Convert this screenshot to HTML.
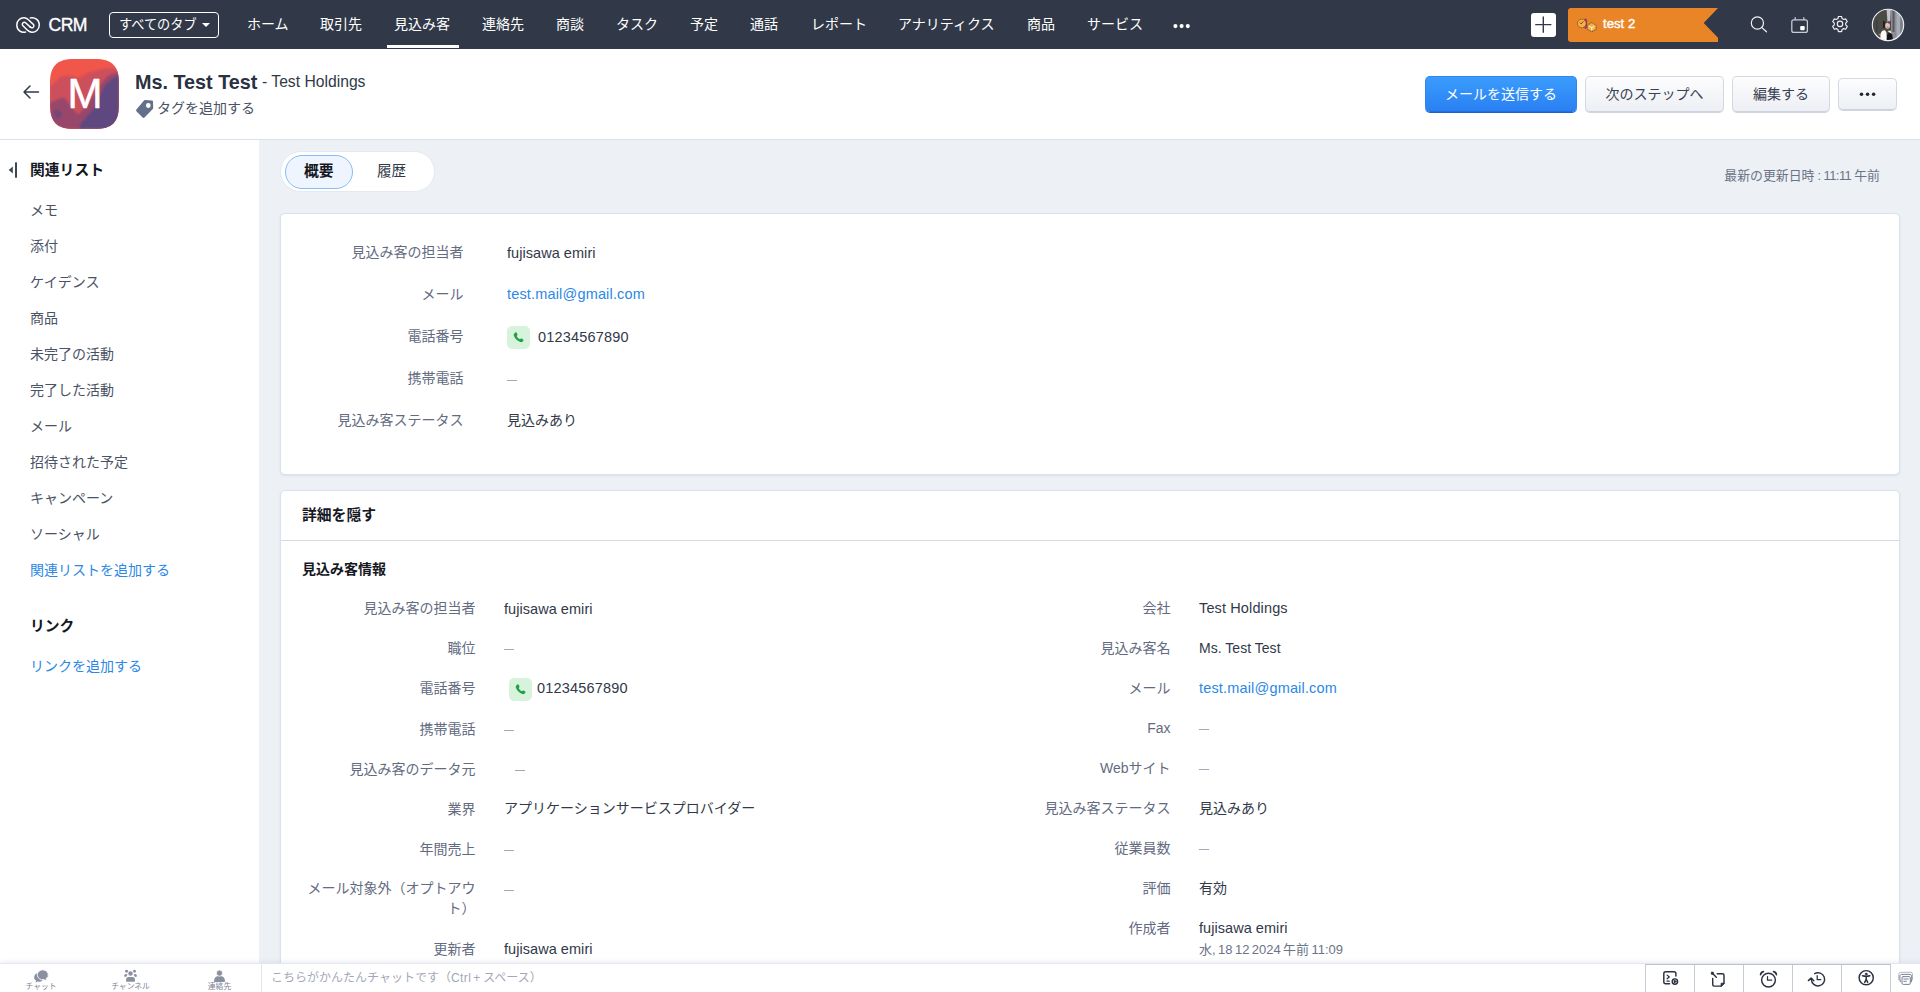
<!DOCTYPE html>
<html lang="ja">
<head>
<meta charset="utf-8">
<title>Ms. Test Test - CRM</title>
<style>
*{box-sizing:border-box;margin:0;padding:0}
html,body{width:1920px;height:992px;overflow:hidden;background:#edf0f5}
body{font-family:"Liberation Sans","Noto Sans CJK JP",sans-serif;font-size:14px;color:#313949;position:relative;-webkit-font-smoothing:antialiased}
.abs{position:absolute;white-space:nowrap}
/* top nav */
#nav{position:absolute;left:0;top:0;width:1920px;height:49px;background:#313949}
#nav .t{position:absolute;top:0;height:49px;line-height:49px;color:#fff;font-size:14px;white-space:nowrap}
#nav .brand{font-size:17.600px;left:48.500px;letter-spacing:-0.55px;line-height:51px;-webkit-text-stroke:0.35px #fff}
#alltabs{position:absolute;left:109px;top:12px;width:110px;height:26px;border:1px solid #fff;border-radius:4px;color:#fff;font-size:13.2px;line-height:24px;padding-left:9px;white-space:nowrap}
#alltabs i{position:absolute;right:8px;top:10px;border:4px solid transparent;border-top:4.5px solid #fff;border-bottom:0}
#navul{position:absolute;left:387px;top:45px;width:72px;height:3px;background:#fff}
/* header */
#hdr{position:absolute;left:0;top:49px;width:1920px;height:91px;background:#fff;border-bottom:1px solid #d8e1ee}
#avatar{position:absolute;left:50px;top:10px;width:69px;height:70px;color:#fff;font-size:42px;text-align:center;line-height:69px;padding-left:1px;-webkit-text-stroke:0.5px #fff}
.btn{position:absolute;height:36px;top:27px;border:1px solid #d3d8e2;border-bottom-color:#cdd2dd;border-radius:5px;background:linear-gradient(#fdfdfe,#eceff4);box-shadow:0 1px 0 #cfd4df;font-size:14px;line-height:35px;text-align:center;color:#394052;white-space:nowrap}
.btn.blue{background:linear-gradient(#3a9cfc,#2a80f2);border-color:#2f86f0;border-bottom-color:#1f6fe0;box-shadow:0 1px 0 #1c62cc;color:#fff}
/* sidebar */
#side{position:absolute;left:0;top:140px;width:259px;height:824px;background:#fff}
#side .it{position:absolute;left:30px;font-size:14px;color:#4a5265;white-space:nowrap;line-height:20px}
#side .hd{position:absolute;left:30px;font-size:14.8px;font-weight:bold;color:#15181f;white-space:nowrap;line-height:20px}
#side .lk{color:#2b88e6}
/* main */
.card{position:absolute;background:#fff;border:1px solid #d9e2ef;border-radius:5px;box-shadow:0 1px 2px rgba(190,200,220,.4)}
.lab{position:absolute;text-align:right;color:#636b7f;font-size:14px;line-height:20px;white-space:nowrap}
.val{position:absolute;color:#313949;font-size:14px;line-height:20px;white-space:nowrap}
.val.lk{color:#2b88e6}
.dash{position:absolute;width:10px;height:1px;background:#a2a8b8}
.ph{position:absolute;width:23px;height:23px;border-radius:5px;background:#d7f3db}
.ph svg{position:absolute;left:6px;top:6px}
.en{font-size:14.5px}
/* bottom */
#bot{position:absolute;left:0;top:964px;width:1920px;height:28px;background:#fff;box-shadow:0 -1px 0 #e4e7ee,0 -2px 5px rgba(160,170,195,.22)}
.bl{top:18px;text-align:center;font-size:7.8px;line-height:10px;color:#7f8598}
</style>
</head>
<body>

<div id="nav">
  <svg class="abs" style="left:12px;top:12px" width="32" height="26" viewBox="12 12 32 26" fill="none" stroke="#fff" stroke-width="1.45" stroke-linecap="round" stroke-linejoin="round">
    <path d="M25.600 32.100C21.200 33.100 16.800 30.200 16.800 25C16.800 20.300 20.600 17.500 24.300 17.800C26.300 18 27.600 18.900 29 20.300L33 24.100C34.200 25.300 34.100 26.600 33.200 27.300C32.200 28 31.100 27.800 30.100 26.900"/>
    <path d="M30.300 17.900C34.700 16.900 39.300 19.800 39.300 25C39.300 29.700 35.400 32.500 31.700 32.200C29.700 32 28.400 31.100 27 29.700L23.200 26C22 24.800 22.100 23.500 23 22.800C24 22.100 25.100 22.300 26.100 23.200L30.100 26.900"/>
  </svg>
  <div class="t brand">CRM</div>
  <div id="alltabs">すべてのタブ<i></i></div>
  <div class="t" style="left:247px">ホーム</div>
  <div class="t" style="left:320px">取引先</div>
  <div class="t" style="left:394px">見込み客</div>
  <div class="t" style="left:482px">連絡先</div>
  <div class="t" style="left:556px">商談</div>
  <div class="t" style="left:616px">タスク</div>
  <div class="t" style="left:690px">予定</div>
  <div class="t" style="left:750px">通話</div>
  <div class="t" style="left:811px">レポート</div>
  <div class="t" style="left:898px">アナリティクス</div>
  <div class="t" style="left:1027px">商品</div>
  <div class="t" style="left:1087px">サービス</div>
  <svg class="abs" style="left:1170px;top:20px" width="24" height="12" viewBox="1170 20 24 12" fill="#fff"><circle cx="1175.400" cy="26.100" r="2.050"/><circle cx="1181.600" cy="26.100" r="2.050"/><circle cx="1187.800" cy="26.100" r="2.050"/></svg>
  <div class="abs" style="left:1531px;top:13px;width:25px;height:24px;background:#fff;border-radius:3px">
    <svg class="abs" style="left:0;top:0" width="25" height="24" viewBox="1531 13 25 24" stroke="#313949" stroke-width="1.4" fill="none"><path d="M1543.300 16.400V32.800M1535.200 24.600H1551.400"/></svg>
  </div>
  <svg class="abs" style="left:1560px;top:0" width="360" height="49" viewBox="1560 0 360 49">
    <path d="M1571 8H1718L1703.700 23L1718 37.700V42H1571Q1568 42 1568 39V11Q1568 8 1571 8Z" fill="#e98526"/>
    <g stroke="#4a3a4e" stroke-width="0.8" stroke-dasharray="1.300 .7">
      <rect x="1584.500" y="19" width="2.200" height="9.500" rx="1" fill="#b23a6e" stroke="#8a2d58"/>
      <circle cx="1581.800" cy="23.500" r="4.300" fill="#f6b13c"/>
      <path d="M1587.300 25.300L1591.800 22.600L1596.200 25.300V29.300L1591.800 31.600L1587.300 29.300Z" fill="#f6b13c"/>
    </g>
    <path d="M1579.800 22.600l1.300 1.300l2.300-2.600" stroke="#6b3a2a" stroke-width="0.9" fill="none"/>
    <path d="M1589.300 26.400l2.500 1.200l2.500-1.200M1591.800 27.600v2.600" stroke="#fff" stroke-width="0.9" fill="none"/>
    <g fill="none" stroke="#f2f3f6" stroke-width="1.200" stroke-linecap="round">
      <circle cx="1757.400" cy="23" r="6.100"/>
      <path d="M1761.900 27.600L1766.500 31.800"/>
    </g>
    <g fill="none" stroke="#c9cdd8" stroke-width="1.250" stroke-linecap="round">
      <rect x="1791.800" y="19.800" width="15.600" height="12.600" rx="2"/>
      <path d="M1795.200 17.600V19.600M1803.800 17.600V19.600"/>
    </g>
    <rect x="1800.200" y="25.900" width="4.500" height="4.300" rx="1" fill="#fff"/>
    <g fill="none" stroke="#eef0f4" stroke-width="1.150" stroke-linejoin="round">
      <circle cx="1840" cy="23.900" r="2.700"/>
      <path d="M1838.400 16.500h3.200l.5 2.100l1.500.9l2.100-.6l1.600 2.800l-1.600 1.500v1.700l1.600 1.500l-1.600 2.800l-2.100-.6l-1.500.9l-.5 2.100h-3.200l-.5-2.100l-1.500-.9l-2.100.6l-1.600-2.800l1.600-1.500v-1.700l-1.600-1.500l1.600-2.800l2.100.6l1.500-.9z"/>
    </g>
    <defs><clipPath id="avc"><circle cx="1888" cy="24.900" r="15.500"/></clipPath></defs>
    <g clip-path="url(#avc)">
      <rect x="1872" y="8" width="32" height="34" fill="#4b4a44"/>
      <rect x="1891" y="8" width="13" height="34" fill="#8b8f9b"/>
      <rect x="1892.500" y="10" width="2" height="22" fill="#5a5b58"/>
      <rect x="1896.500" y="10" width="3.500" height="30" fill="#a7abb6"/>
      <rect x="1900.500" y="14" width="2" height="24" fill="#7a7e89"/>
      <path d="M1886.500 8.500H1890.800L1890.300 21L1887.500 22Z" fill="#c3c6cf"/>
      <rect x="1876" y="20" width="1.500" height="12" fill="#3b3d4a"/>
      <rect x="1883" y="21" width="1.800" height="7" fill="#1f1f23"/>
      <path d="M1880.400 41V34.500Q1881.500 30.300 1884.300 30.300Q1886.200 30.500 1886.600 34V41Z" fill="#fafafb"/>
      <path d="M1886.800 41L1887.200 34.500L1889.600 32.400L1892.200 34.500L1893.200 41Z" fill="#141417"/>
      <path d="M1887.500 31L1890.500 30.500L1891.500 33.500L1889.500 32.500Z" fill="#eeeef0"/>
      <ellipse cx="1887.600" cy="25.800" rx="2.400" ry="3" fill="#dfc3c0"/>
      <circle cx="1887.700" cy="27.300" r="1.100" fill="#e08484"/>
      <rect x="1888" y="21" width=".9" height="2.600" fill="#b2326b"/>
      <circle cx="1895.600" cy="34" r=".7" fill="#d45a5a"/><circle cx="1879.500" cy="34.500" r=".7" fill="#e08a80"/>
    </g>
    <circle cx="1888" cy="24.900" r="15.700" fill="none" stroke="#f1f2f5" stroke-width="1.100"/>
  </svg>
  <div class="t" style="left:1603px;font-size:13.2px;line-height:47px;letter-spacing:0;-webkit-text-stroke:0.4px #fff">test 2</div>
  <div id="navul"></div>
</div>

<div id="hdr">
  <svg class="abs" style="left:22px;top:35px" width="18" height="16" viewBox="0 0 18 16" fill="none" stroke="#313949" stroke-width="1.5" stroke-linecap="round" stroke-linejoin="round"><path d="M16.500 8H2M8 2L2 8l6 6"/></svg>
  <svg class="abs" style="left:50px;top:10px" width="69" height="70" viewBox="0 0 69 70">
    <defs><clipPath id="sq"><path d="M24 0H45C62 0 69 7 69 24V46C69 63 62 70 45 70H24C7 70 0 63 0 46V24C0 7 7 0 24 0Z"/></clipPath><filter id="bl" x="-10%" y="-10%" width="120%" height="120%"><feGaussianBlur stdDeviation="0.9"/></filter></defs>
    <g clip-path="url(#sq)">
      <rect width="69" height="70" fill="#f0564a"/>
      <g filter="url(#bl)">
      <path d="M0 28L5 23L10 18L16 16.500L22 17.500L28 19L33 17L38 13.500L45 12L54 9.500L63 9L69 12V70H0Z" fill="#cd505c"/>
      <path d="M0 44L6 41L12 38.500L16 40L20 46L26 54L29 55L33 50L40 41L46 33L50 26L54 21L60 15.500L66 13.500L69 14V70H0Z" fill="#98476b"/>
      <path d="M29 70L31 64L36 58L42 52L47 44L51 34L55 26L62 20L69 16V70Z" fill="#5f4780"/>
      <path d="M3 52L8 50L12 54L11 59L6 60Z" fill="#6b4779" opacity=".8"/>
      </g>
    </g>
  </svg>
  <div id="avatar">M</div>
  <div class="abs" style="left:135px;top:20px;font-size:19.8px;font-weight:bold;line-height:26px;color:#2a3142">Ms. Test Test</div>
  <div class="abs" style="left:262px;top:22px;font-size:15.7px;line-height:22px;color:#313949">- Test Holdings</div>
  <svg class="abs" style="left:134px;top:49px" width="22" height="22" viewBox="134 98 22 22"><path fill-rule="evenodd" d="M145 100L152 100.600Q153 100.700 153 101.800L153.200 108Q153.200 108.600 152.800 109L144.500 117.600Q143.500 118.500 142.600 117.600L136.400 111.300Q135.700 110.400 136.400 109.600L144 100.500Q144.400 100 145 100ZM148.300 103.100a2.400 2.400 0 1 0 0 4.800a2.400 2.400 0 1 0 0-4.800Z" fill="#627089"/></svg>
  <div class="abs" style="left:157px;top:49px;font-size:14px;line-height:20px;color:#4a5265">タグを追加する</div>
  <div class="btn blue" style="left:1425px;width:152px">メールを送信する</div>
  <div class="btn" style="left:1585px;width:139px">次のステップへ</div>
  <div class="btn" style="left:1732px;width:98px">編集する</div>
  <div class="btn" style="left:1838px;width:59px;top:29px;height:32px"><svg class="abs" style="left:16px;top:10px" width="26" height="10" viewBox="1855 89 26 10" fill="#1f2533"><circle cx="1861.500" cy="94.200" r="1.750"/><circle cx="1867.550" cy="94.200" r="1.750"/><circle cx="1873.600" cy="94.200" r="1.750"/></svg></div>
</div>

<div id="side">
  <svg class="abs" style="left:6px;top:20px" width="14" height="20" viewBox="6 160 14 20" fill="#3e4555"><path d="M8.700 170L12.800 166.600V173.600Z"/><rect x="15" y="162.200" width="2" height="15.600" rx="0.500"/></svg>
  <div class="hd" style="top:20px">関連リスト</div>
  <div class="it" style="top:60px">メモ</div>
  <div class="it" style="top:96px">添付</div>
  <div class="it" style="top:132px">ケイデンス</div>
  <div class="it" style="top:168px">商品</div>
  <div class="it" style="top:204px">未完了の活動</div>
  <div class="it" style="top:240px">完了した活動</div>
  <div class="it" style="top:276px">メール</div>
  <div class="it" style="top:312px">招待された予定</div>
  <div class="it" style="top:348px">キャンペーン</div>
  <div class="it" style="top:384px">ソーシャル</div>
  <div class="it lk" style="top:420px">関連リストを追加する</div>
  <div class="hd" style="top:476px">リンク</div>
  <div class="it lk" style="top:516px">リンクを追加する</div>
</div>

<div id="main">
  <div class="abs" style="left:280px;top:151px;width:155px;height:41px;background:#fff;border:1px solid #e5e8ef;border-radius:21px"></div>
  <div class="abs" style="left:285px;top:155px;width:68px;height:34px;background:#eef5fe;border:1px solid #86bdf6;border-radius:17px"></div>
  <div class="abs" style="left:304px;top:161px;font-size:14.8px;font-weight:bold;line-height:20px;color:#15181f">概要</div>
  <div class="abs" style="left:377px;top:161px;font-size:14.6px;line-height:20px;color:#313949">履歴</div>
  <div class="abs" style="right:40px;top:167px;font-size:12.9px;line-height:18px;color:#6b7386">最新の更新日時<span style="letter-spacing:-0.55px"> : 11:11 </span>午前</div>
  <div class="card" style="left:280px;top:213px;width:1620px;height:262px"></div>
  <div class="lab" style="right:1456.5px;top:242px">見込み客の担当者</div>
  <div class="val en" style="left:507px;top:243px;letter-spacing:0.05px">fujisawa emiri</div>
  <div class="lab" style="right:1456.5px;top:284px">メール</div>
  <div class="val lk en" style="left:507px;top:284px;letter-spacing:0.17px">test.mail@gmail.com</div>
  <div class="lab" style="right:1456.5px;top:326px">電話番号</div>
  <div class="ph" style="left:507px;top:326px"><svg width="11" height="11" viewBox="0 0 11 11"><path d="M2.300 0.600C2.700 0.200 3.300 0.300 3.600 0.800L4.400 2.300C4.600 2.700 4.500 3.100 4.200 3.400L3.700 3.900C4.200 5.200 5.600 6.700 7 7.300L7.600 6.700C7.900 6.400 8.400 6.400 8.700 6.600L10.100 7.500C10.600 7.800 10.600 8.400 10.300 8.800L9.700 9.500C9.100 10.200 8.100 10.400 7.200 10.100C3.900 8.900 1.700 6.300 0.800 3.600C0.500 2.700 0.800 1.900 1.400 1.400Z" fill="#22a045"/></svg></div>
  <div class="val en" style="left:538px;top:327px;letter-spacing:0.19px">01234567890</div>
  <div class="lab" style="right:1456.5px;top:368px">携帯電話</div>
  <div class="dash" style="left:507px;top:380px"></div>
  <div class="lab" style="right:1456.5px;top:410px">見込み客ステータス</div>
  <div class="val" style="left:507px;top:410px">見込みあり</div>
  <div class="card" style="left:280px;top:490px;width:1620px;height:520px"></div>
  <div class="abs" style="left:281px;top:540px;width:1618px;height:1px;background:#d5dae3"></div>
  <div class="abs" style="left:302px;top:505px;font-size:14.8px;font-weight:bold;line-height:20px;color:#15181f">詳細を隠す</div>
  <div class="abs" style="left:302px;top:559px;font-size:14px;font-weight:bold;line-height:20px;color:#15181f">見込み客情報</div>
  <div class="lab" style="right:1444.5px;top:598px">見込み客の担当者</div>
  <div class="val en" style="left:504px;top:599px;letter-spacing:0.05px">fujisawa emiri</div>
  <div class="lab" style="right:1444.5px;top:638px">職位</div>
  <div class="dash" style="left:504px;top:649px"></div>
  <div class="lab" style="right:1444.5px;top:678px">電話番号</div>
  <div class="ph" style="left:509px;top:678px"><svg width="11" height="11" viewBox="0 0 11 11"><path d="M2.300 0.600C2.700 0.200 3.300 0.300 3.600 0.800L4.400 2.300C4.600 2.700 4.500 3.100 4.200 3.400L3.700 3.900C4.200 5.200 5.600 6.700 7 7.300L7.600 6.700C7.900 6.400 8.400 6.400 8.700 6.600L10.100 7.500C10.600 7.800 10.600 8.400 10.300 8.800L9.700 9.500C9.100 10.200 8.100 10.400 7.200 10.100C3.900 8.900 1.700 6.300 0.800 3.600C0.500 2.700 0.800 1.900 1.400 1.400Z" fill="#22a045"/></svg></div>
  <div class="val en" style="left:537px;top:678px;letter-spacing:0.19px">01234567890</div>
  <div class="lab" style="right:1444.5px;top:719px">携帯電話</div>
  <div class="dash" style="left:504px;top:730px"></div>
  <div class="lab" style="right:1444.5px;top:759px">見込み客のデータ元</div>
  <div class="dash" style="left:515px;top:770px"></div>
  <div class="lab" style="right:1444.5px;top:799px">業界</div>
  <div class="val" style="left:504px;top:798px">アプリケーションサービスプロバイダー</div>
  <div class="lab" style="right:1444.5px;top:839px">年間売上</div>
  <div class="dash" style="left:504px;top:850px"></div>
  <div class="lab" style="right:1444.5px;top:878px;width:180px;white-space:normal">メール対象外（オプトアウ<br>ト）</div>
  <div class="dash" style="left:504px;top:890px"></div>
  <div class="lab" style="right:1444.5px;top:939px">更新者</div>
  <div class="val en" style="left:504px;top:939px;letter-spacing:0.05px">fujisawa emiri</div>
  <div class="lab" style="right:749.5px;top:598px">会社</div>
  <div class="val en" style="left:1199px;top:598px;letter-spacing:0.13px">Test Holdings</div>
  <div class="lab" style="right:749.5px;top:638px">見込み客名</div>
  <div class="val en" style="left:1199px;top:638px;font-size:14px;letter-spacing:0.03px">Ms. Test Test</div>
  <div class="lab" style="right:749.5px;top:678px">メール</div>
  <div class="val lk en" style="left:1199px;top:678px;letter-spacing:0.17px">test.mail@gmail.com</div>
  <div class="lab" style="right:749.5px;top:718px">Fax</div>
  <div class="dash" style="left:1199px;top:729px"></div>
  <div class="lab" style="right:749.5px;top:758px">Webサイト</div>
  <div class="dash" style="left:1199px;top:769px"></div>
  <div class="lab" style="right:749.5px;top:798px">見込み客ステータス</div>
  <div class="val" style="left:1199px;top:798px">見込みあり</div>
  <div class="lab" style="right:749.5px;top:838px">従業員数</div>
  <div class="dash" style="left:1199px;top:849px"></div>
  <div class="lab" style="right:749.5px;top:878px">評価</div>
  <div class="val" style="left:1199px;top:878px">有効</div>
  <div class="lab" style="right:749.5px;top:918px">作成者</div>
  <div class="val en" style="left:1199px;top:918px;letter-spacing:0.05px">fujisawa emiri</div>
  <div class="val" style="left:1199px;top:940px;font-size:13px;color:#6b7386;word-spacing:-1.2px">水, 18 12 2024 午前 11:09</div>
</div>

<div id="bot">
  <svg class="abs" style="left:0;top:0" width="262" height="28" viewBox="0 964 262 28" fill="#8b90a0">
    <path d="M38.800 973a4.700 4.200 0 0 0-2.700 7.600l-.7 1.800l2.500-.8a4.700 4.200 0 0 0 4.700-1.400z"/>
    <path d="M42.700 969.800a5.600 5 0 0 1 3.400 9l.8 2.500l-2.900-1.600a5.600 5 0 1 1-1.300-9.900z" stroke="#fff" stroke-width=".9"/>
    <circle cx="130.500" cy="973.500" r="2.250"/><path d="M126.100 981.400v-1.900q0-2.500 2.500-2.500h3.800q2.500 0 2.500 2.500v1.900q0 .4-.4.400h-8q-.4 0-.4-.4z"/>
    <circle cx="126.600" cy="971.300" r="1.450"/><circle cx="134.500" cy="971.300" r="1.450"/>
    <path d="M124.100 976.400q0-2.300 1.800-2.300q1.300 0 1.700 1q-.9.700-1.500 1.800zM137 976.400q0-2.300-1.800-2.300q-1.300 0-1.700 1q.9.700 1.500 1.800z"/>
    <path d="M214 981.300q0-5.300 5.500-5.300q5.500 0 5.500 5.300q0 .6-.6.600h-9.800q-.6 0-.6-.6z"/><circle cx="219.500" cy="973.100" r="3.100" stroke="#fff" stroke-width=".8"/>
  </svg>
  <div class="abs bl" style="left:21px;width:40px">チャット</div>
  <div class="abs bl" style="left:106px;width:49px">チャンネル</div>
  <div class="abs bl" style="left:204px;width:31px">連絡先</div>
  <div class="abs" style="left:261px;top:0;width:1px;height:28px;background:#e1e5ec"></div>
  <div class="abs" style="left:271px;top:5px;font-size:12px;line-height:18px;color:#a3a8b6">こちらがかんたんチャットです（<span style="letter-spacing:.45px">Ctrl</span><span style="margin:0 2.800px 0 2px">+</span>スペース）</div>
  <div class="abs" style="left:1645px;top:0;width:246px;height:28px;border-top:1px solid #bcc2ce;border-left:1px solid #c5cad5;background:repeating-linear-gradient(90deg,transparent 0,transparent 48px,#c5cad5 48px,#c5cad5 49px)"></div>
  <svg class="abs" style="left:1646px;top:0" width="274" height="28" viewBox="1646 964 274 28" fill="none" stroke="#2a3142" stroke-width="1.450" stroke-linecap="round" stroke-linejoin="round">
    <path d="M1669.600 983.700H1665.700Q1663.800 983.700 1663.800 981.800V973.700Q1663.800 971.800 1665.700 971.800H1674Q1675.900 971.800 1675.900 973.700V976"/>
    <path d="M1667.100 975.100l2.200 1.850l-2.200 1.850M1666.900 981.100h2.400" stroke-width="1.200"/>
    <circle cx="1674.900" cy="981.600" r="2.700"/><path d="M1674 980v3.200l2.600-1.600z" fill="#2a3142" stroke-width=".5"/>
    <path d="M1717.200 973.800H1722.500Q1724 973.800 1724 975.300V983.200L1721.100 986.100H1714.200Q1712.700 986.100 1712.700 984.600V978.500"/>
    <path d="M1724 983.200H1721.100V986.100Z" fill="#2a3142" stroke-width=".8"/>
    <rect x="1711.200" y="972.100" width="2.400" height="2.400" rx=".6" fill="#2a3142" stroke-width=".5"/><path d="M1712.400 973.300l3.900 3.900"/>
    <circle cx="1768.500" cy="980.100" r="6.900"/><path d="M1767.500 976.600v3.600h4.200" stroke-width="1.250"/>
    <path d="M1760.500 974.800q.2-2.600 3-3.200q-1.900.8-3 3.200zM1776.500 974.800q-.2-2.600-3-3.200q1.900.8 3 3.200z" fill="#2a3142" stroke-width="1.500"/>
    <path d="M1814.700 973.600A6.600 6.600 0 1 1 1811.400 979.400"/><path d="M1808.400 980.600L1811.100 978.100L1813.800 980.700"/><path d="M1817.200 975.500v4.200h3.600" stroke-width="1.250"/>
    <circle cx="1866.200" cy="977.700" r="7.100"/><circle cx="1866.200" cy="974.100" r="1.100" fill="#2a3142" stroke-width=".5"/>
    <path d="M1862.500 975.700q3.700 1 7.400 0M1866.200 976.300v2.900M1866.200 979.200l-1.500 3.200M1866.200 979.200l1.500 3.200" stroke-width="1.500"/>
    <g stroke="#747b8d" stroke-width=".95">
      <rect x="1902" y="976.600" width="8.300" height="7.800" rx="1.300" fill="#fff"/>
      <path d="M1900.300 981.800Q1899.400 978 1900 975.600Q1900.400 974.500 1901.700 974.400H1909.800Q1911.400 974.500 1911.600 975.800Q1911.900 978.500 1911.400 981.800"/>
      <path d="M1898.900 980Q1898.400 976 1899 973.500Q1899.500 972.300 1900.800 972.300H1910.600Q1912.100 972.300 1912.400 973.700Q1912.900 976.500 1912.300 980" opacity=".6"/>
      <path d="M1903.800 979h4.500M1903.800 981.300h2.600"/>
    </g>
  </svg>
</div>

</body>
</html>
